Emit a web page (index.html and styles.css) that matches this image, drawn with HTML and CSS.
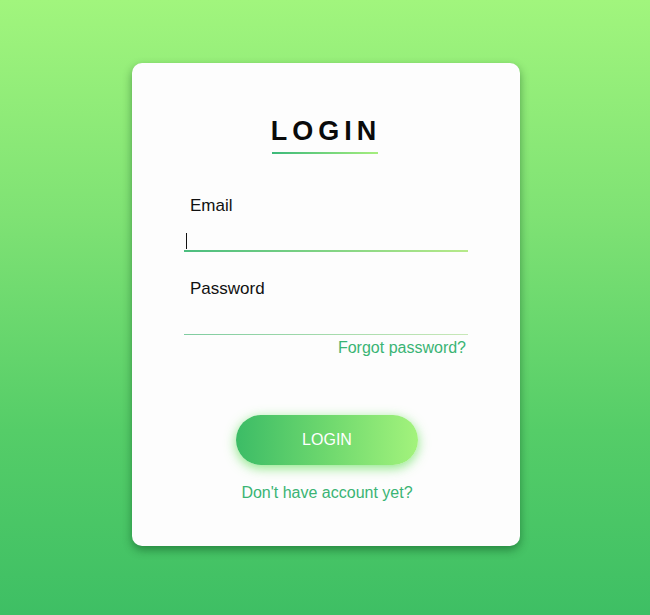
FILE: index.html
```html
<!DOCTYPE html>
<html>
<head>
<meta charset="utf-8">
<link rel="stylesheet" href="styles.css">
</head>
<body>
<div class="page">
  <div class="card">
    <h1 class="title">LOGIN</h1>
    <form class="form">
      <label class="field">
        <span class="label">Email</span>
        <span class="input active"><span class="caret"></span></span>
      </label>
      <label class="field">
        <span class="label">Password</span>
        <span class="input"></span>
      </label>
      <a class="forgot">Forgot password?</a>
      <button type="button" class="btn">LOGIN</button>
      <a class="signup">Don't have account yet?</a>
    </form>
  </div>
</div>
</body>
</html>
```
FILE: styles.css
```css
* { box-sizing: border-box; }
html, body { margin: 0; padding: 0; }
body {
  font-family: "Liberation Sans", Arial, sans-serif;
  width: 650px;
  height: 615px;
  overflow: hidden;
}
.page {
  width: 650px;
  height: 615px;
  background: linear-gradient(180deg, #a1f57d 0%, #7fe274 35%, #55cd68 70%, #3ebf64 100%);
  padding-top: 63px;
  display: flex;
  justify-content: center;
}
.card {
  width: 388px;
  height: 483px;
  margin-left: 2px;
  background: #fdfdfd;
  border-radius: 10px;
  box-shadow: 0 4px 10px rgba(0, 60, 20, 0.45);
  display: flex;
  flex-direction: column;
  align-items: center;
}
.title {
  margin: 52px 0 0 0;
  font-size: 27px;
  font-weight: 700;
  letter-spacing: 5px;
  padding-left: 0;
  color: #0a0a0a;
  line-height: 32px;
  display: flex;
  flex-direction: column;
  align-items: center;
}
.title::after {
  content: "";
  display: block;
  width: 106px;
  height: 2px;
  margin-top: 5px;
  margin-left: -3px;
  background: linear-gradient(90deg, #3cb97a, #a6ee7e);
}
.form {
  width: 284px;
  margin-top: 42px;
  margin-left: 0;
  display: flex;
  flex-direction: column;
}
.field {
  display: flex;
  flex-direction: column;
}
.label {
  font-size: 17px;
  color: #111;
  padding-left: 6px;
  line-height: 20px;
}
.input {
  height: 24px;
  margin-top: 12px;
  margin-bottom: 27px;
  display: block;
  border-bottom: 1px solid transparent;
  border-image: linear-gradient(90deg, #7fcca0, #c8e8b8) 1;
  position: relative;
}
.input.active {
  border-bottom-width: 2px;
  border-image: linear-gradient(90deg, #4bbd7f, #b7ea8a) 1;
}
.caret {
  position: absolute;
  left: 2px;
  top: 5px;
  width: 1.2px;
  height: 16px;
  background: #111;
}
.forgot {
  align-self: flex-end;
  margin-top: -24px;
  margin-right: 2px;
  font-size: 16px;
  color: #3ab474;
  line-height: 20px;
}
.btn {
  align-self: center;
  margin-top: 57px;
  margin-left: 2px;
  width: 182px;
  height: 50px;
  border: none;
  border-radius: 25px;
  background: linear-gradient(90deg, #3cbc66 0%, #6ed86e 50%, #a3f37c 100%);
  color: #fff;
  font-family: "Liberation Sans", Arial, sans-serif;
  font-size: 16px;
  box-shadow: 0 3px 12px rgba(110, 225, 100, 0.8);
}
.signup {
  align-self: center;
  margin-top: 18px;
  margin-left: 2px;
  font-size: 16px;
  color: #3ab474;
  line-height: 20px;
}
```
